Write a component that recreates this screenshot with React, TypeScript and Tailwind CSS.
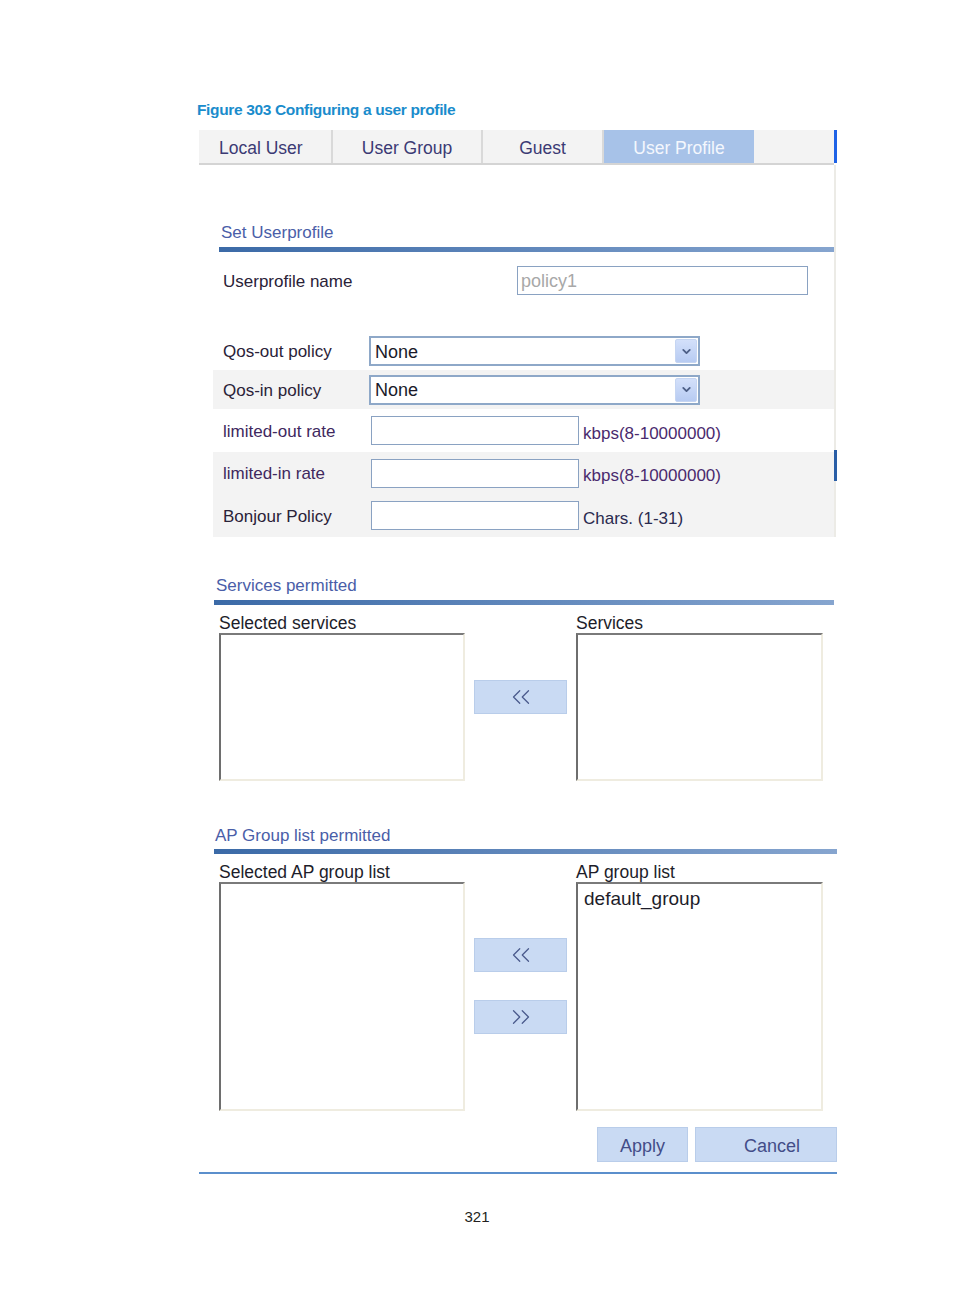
import React from 'react';
import { ChevronDown, ChevronsLeft, ChevronsRight } from 'lucide-react';

const tabs = [
  { label: 'Local User', w: 'w-[134px]', cls: 'justify-start pl-[20px]' },
  { label: 'User Group', w: 'w-[150px]', cls: 'justify-center' },
  { label: 'Guest', w: 'w-[121px]', cls: 'justify-center' },
];

const SectionTitle: React.FC<{ text: string; titleCls: string; barCls: string }> = ({ text, titleCls, barCls }) => (
  <>
    <div className={`text-[17px] leading-[20px] pt-[1px] text-[#4a5ea8] ${titleCls}`}>{text}</div>
    <div className={`h-[5px] bg-gradient-to-r from-[#3b6aa7] to-[#86a5cf] ${barCls}`} />
  </>
);

const Select: React.FC<{ value: string }> = ({ value }) => (
  <div className="flex items-center w-[331px] h-[30px] border-2 border-[#8ea8c8] bg-white pl-[4px] pr-[1px]">
    <span className="flex-1 text-[18px] leading-none pt-[1px] text-[#1a1a2a]">{value}</span>
    <span className="flex items-center justify-center w-[22px] h-[24px] bg-gradient-to-b from-[#d3e0fa] to-[#b7cbf2] rounded-[2px] border border-[#c5d5f2]">
      <ChevronDown size={13} strokeWidth={3.4} className="text-[#4d5f86]" />
    </span>
  </div>
);

const TextInput: React.FC<{ w: string; value?: string }> = ({ w, value }) => (
  <div className={`${w} h-[29px] border border-[#8aa2c2] bg-white flex items-center pl-[3px] pt-[1px] text-[18px] text-[#a8a8a8]`}>
    {value}
  </div>
);

const ListBox: React.FC<{ h: string; items?: string[] }> = ({ h, items = [] }) => (
  <div className={`${h} border-2 border-t-[#7a7a7a] border-l-[#6e6e6e] border-r-[#efece0] border-b-[#efece0] bg-white pl-[6px] pt-[4px]`}>
    {items.map((it) => (
      <div key={it} className="text-[19px] leading-[22px] text-[#1d1d2a]">
        {it}
      </div>
    ))}
  </div>
);

const MoveButton: React.FC<{ dir: 'left' | 'right'; mt: string }> = ({ dir, mt }) => (
  <div className={`${mt} w-[93px] h-[34px] bg-[#c9daf3] border border-[#b9cdea] flex items-center justify-center`}>
    {dir === 'left' ? (
      <ChevronsLeft size={30} strokeWidth={1} className="text-[#4a5a8c]" />
    ) : (
      <ChevronsRight size={30} strokeWidth={1} className="text-[#4a5a8c]" />
    )}
  </div>
);

export default function App() {
  return (
    <div className="w-[954px] h-[1296px] bg-white font-['Liberation_Sans',Arial,sans-serif] pt-[100px]">
      {/* caption */}
      <div className="pl-[197px] text-[15.5px] leading-[19px] font-bold text-[#1a8ccc] tracking-[-0.35px]">
        Figure 303 Configuring a user profile
      </div>

      <div className="ml-[199px] w-[638px]">
        {/* tabs */}
        <div className="mt-[11px] flex">
          <div className="w-[635px] h-[35px] flex bg-[#f3f3f3] border-b-2 border-[#d4d4d4]">
            {tabs.map((t) => (
              <div
                key={t.label}
                className={`${t.w} h-[33px] flex items-center pt-[3px] border-r-2 border-[#d9d9d9] text-[17.5px] text-[#3b3a74] ${t.cls}`}
              >
                {t.label}
              </div>
            ))}
            <div className="w-[150px] h-[33px] flex items-center justify-center pt-[3px] bg-[#a7c2e8] text-[17.5px] text-[#f4f7fd]">
              User Profile
            </div>
          </div>
          <div className="w-[3px] h-[33px] bg-[#1e62e6]" />
        </div>

        {/* set userprofile */}
        <div className="w-[637px] border-r-2 border-[#ecebe6]">
          <div className="pt-[57px]">
            <SectionTitle text="Set Userprofile" titleCls="pl-[22px]" barCls="ml-[20px] w-[615px] mt-[4px]" />
          </div>

          <div className="ml-[14px] w-[621px] text-[17px] text-[#2a2238]">
            <div className="h-[80px] pt-[14px]">
              <div className="flex items-center h-[29px] pl-[10px]">
                <span className="w-[294px] pt-[2px]">Userprofile name</span>
                <TextInput w="w-[291px]" value="policy1" />
              </div>
            </div>

            <div className="h-[38px] flex items-center pl-[10px]">
              <span className="w-[146px] pt-[2px]">Qos-out policy</span>
              <Select value="None" />
            </div>
            <div className="h-[39px] flex items-center pl-[10px] bg-[#f3f3f3]">
              <span className="w-[146px] pt-[2px]">Qos-in policy</span>
              <Select value="None" />
            </div>
            <div className="h-[43px] flex items-center pl-[10px]">
              <span className="w-[148px] pt-[2px] text-[#40285e]">limited-out rate</span>
              <TextInput w="w-[208px]" />
              <span className="ml-[4px] mt-[6px] text-[#4a2a6e]">kbps(8-10000000)</span>
            </div>
            <div className="relative h-[42px] flex items-center pl-[10px] bg-[#f3f3f3]">
              <span className="w-[148px] pt-[2px] text-[#40285e]">limited-in rate</span>
              <TextInput w="w-[208px]" />
              <span className="ml-[4px] mt-[6px] text-[#4a2a6e]">kbps(8-10000000)</span>
              <div className="absolute right-[-3px] top-[-2px] w-[3px] h-[31px] bg-[#2a5ea6]" />
            </div>
            <div className="h-[43px] flex items-center pl-[10px] bg-[#f3f3f3]">
              <span className="w-[148px] pt-[2px]">Bonjour Policy</span>
              <TextInput w="w-[208px]" />
              <span className="ml-[4px] mt-[6px] text-[#2a2a4e]">Chars. (1-31)</span>
            </div>
          </div>
        </div>

        {/* services permitted */}
        <div className="pt-[38px]">
          <SectionTitle text="Services permitted" titleCls="pl-[17px]" barCls="ml-[15px] w-[620px] mt-[4px]" />
        </div>
        <div className="ml-[20px] mt-[7px] grid grid-cols-[246px_111px_247px] text-[17.5px] leading-[20px] text-[#1d1d2a]">
          <div className="pt-[1px]">Selected services</div>
          <div />
          <div className="pt-[1px]">Services</div>
          <ListBox h="h-[148px]" />
          <div className="flex flex-col items-center">
            <MoveButton dir="left" mt="mt-[47px]" />
          </div>
          <ListBox h="h-[148px]" />
        </div>

        {/* ap group list permitted */}
        <div className="pt-[44px]">
          <SectionTitle text="AP Group list permitted" titleCls="pl-[16px]" barCls="ml-[15px] w-[623px] mt-[3px]" />
        </div>
        <div className="ml-[20px] mt-[7px] grid grid-cols-[246px_111px_247px] text-[17.5px] leading-[20px] text-[#1d1d2a]">
          <div className="pt-[1px]">Selected AP group list</div>
          <div />
          <div className="pt-[1px]">AP group list</div>
          <ListBox h="h-[229px]" />
          <div className="flex flex-col items-center">
            <MoveButton dir="left" mt="mt-[56px]" />
            <MoveButton dir="right" mt="mt-[28px]" />
          </div>
          <ListBox h="h-[229px]" items={['default_group']} />
        </div>

        {/* actions */}
        <div className="mt-[16px] flex justify-end gap-[7px]">
          <button className="w-[91px] h-[35px] bg-[#c9daf3] border border-[#b9cdea] text-[18px] text-[#434d88] pt-[4px]">
            Apply
          </button>
          <button className="w-[142px] h-[35px] bg-[#c9daf3] border border-[#b9cdea] text-[18px] text-[#434d88] pt-[4px] pl-[12px]">
            Cancel
          </button>
        </div>
        <div className="mt-[10px] h-[2px] bg-[#5b8fcc]" />
      </div>

      <div className="mt-[34px] text-center text-[15px] leading-[18px] text-[#231f20]">321</div>
    </div>
  );
}
